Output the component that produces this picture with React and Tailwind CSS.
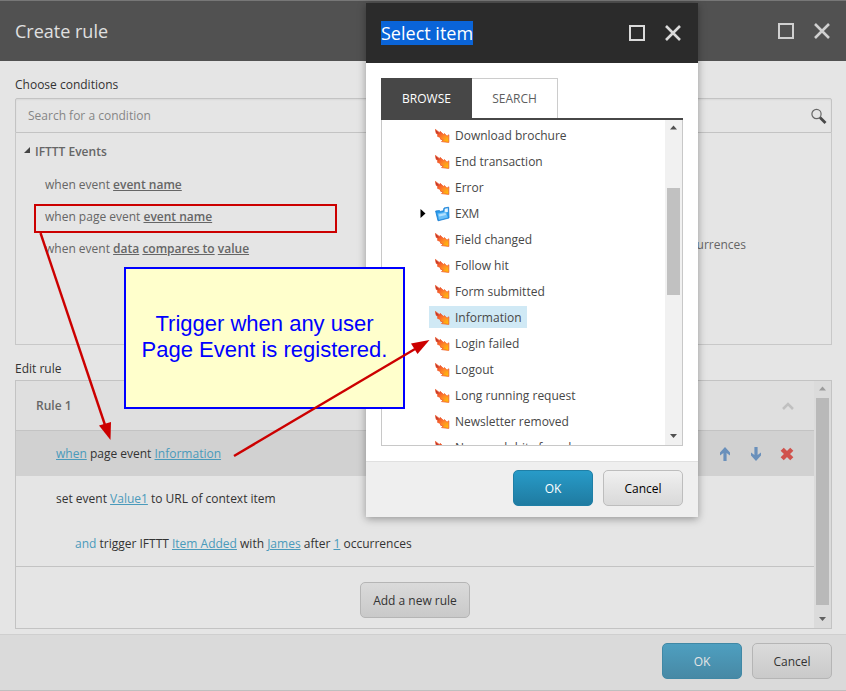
import React from "react";

const items = [
  { name: "Download brochure" },
  { name: "End transaction" },
  { name: "Error" },
  { name: "EXM", folder: true },
  { name: "Field changed" },
  { name: "Follow hit" },
  { name: "Form submitted" },
  { name: "Information", selected: true },
  { name: "Login failed" },
  { name: "Logout" },
  { name: "Long running request" },
  { name: "Newsletter removed" },
  { name: "No search hits found" },
];

function EventIcon() {
  return (
    <svg className="size-4 shrink-0" viewBox="0 0 16 16" aria-hidden="true">
      <defs>
        <linearGradient id="flame" x1="0" y1="0" x2="1" y2="1">
          <stop offset="0.1" stopColor="#a8202c" />
          <stop offset="0.35" stopColor="#f7602c" />
          <stop offset="0.6" stopColor="#ff8c26" />
          <stop offset="1" stopColor="#ffc800" />
        </linearGradient>
      </defs>
      <path d="M0.4 1.4 L4.2 4.4 L5.2 3.4 L8.4 6.4 L9.4 5.6 L12 8.2 L13.8 6.8 V14.4 L6.6 13.6 L8.2 11.8 L5.8 11.4 L5 9.2 L2.6 8.4 L2.8 6.4 L1.2 5.4 Z" fill="url(#flame)" stroke="#f05a28" strokeWidth="0.8" />
    </svg>
  );
}

function FolderIcon() {
  return (
    <svg className="size-4 shrink-0" viewBox="0 0 16 16" aria-hidden="true">
      <path d="M0.6 5 L4.4 4.6 L5.4 5.4 L8.4 4.8 L9 2 L13.6 1.2 L14 12 L3 14.8 Z" fill="#2a9cec" stroke="#1479d0" strokeWidth="0.8" />
      <path d="M9.8 2.8 L12.800 2.300 L12.800 6 L9.500 6.400 Z" fill="#eaf6ff" />
      <path d="M2.600 7.600 L11 5.800 L12.800 11.400 L4 13.800 Z" fill="#6dc0f8" />
      <path d="M3.600 8.400 L10.400 7 L11 9 L4.400 10.600 Z" fill="#b5e1ff" />
    </svg>
  );
}

function WindowControls({ tone }) {
  return (
    <div className={`flex items-center gap-[19px] ${tone}`}>
      <button type="button" aria-label="Maximize" className="size-4 border-2 border-current" />
      <button type="button" aria-label="Close" className="size-[18px]">
        <svg viewBox="0 0 18 18" className="size-full" fill="none" stroke="currentColor" strokeWidth="2.6">
          <path d="M2 2 L16 16 M16 2 L2 16" />
        </svg>
      </button>
    </div>
  );
}

function ScrollBar({ track, thumb, up, down, space }) {
  return (
    <div className={`flex w-[17px] shrink-0 flex-col items-center ${track}`} aria-hidden="true">
      <svg className={`h-[17px] w-[17px] shrink-0 ${up}`} viewBox="0 0 17 17" fill="currentColor">
        <path d="M5 9.500 L8.500 5.500 L12 9.500 Z" />
      </svg>
      <div className={`shrink-0 ${space}`} />
      <div className={`w-[13px] shrink-0 ${thumb}`} />
      <div className="grow" />
      <svg className={`h-[17px] w-[17px] shrink-0 ${down}`} viewBox="0 0 17 17" fill="currentColor">
        <path d="M5 6 L8.500 10 L12 6 Z" />
      </svg>
    </div>
  );
}

function RuleLink({ children }) {
  return <a href="#rule" className="text-[#4a9abb] underline">{children}</a>;
}

function Field({ children }) {
  return <span className="font-semibold underline">{children}</span>;
}

function SelectItemDialog() {
  return (
    <section role="dialog" aria-label="Select item" className="absolute left-[366px] top-[3px] w-[332px] bg-white text-[#474747] shadow-[0_2px_8px_rgba(0,0,0,0.35)]">
      <header className="flex h-[60px] items-center justify-between bg-[#2b2b2b] pl-[15px] pr-4">
        <h2 className="bg-[#0a64d8] text-[18px] leading-6 text-white">Select item</h2>
        <WindowControls tone="text-[#dadada]" />
      </header>
      <div className="p-[15px]">
        <div role="tablist" className="flex h-[42px] border-b-2 border-[#474747]">
          <button type="button" role="tab" aria-selected="true" className="w-[91px] border-t border-[#474747] bg-[#474747] text-white">BROWSE</button>
          <button type="button" role="tab" aria-selected="false" className="w-[86px] border-r border-t border-[#ccc] text-[#5e5e5e]">SEARCH</button>
        </div>
        <div className="flex h-[326px] border border-t-0 border-[#c8c8c8]">
          <ul className="flex min-w-0 grow flex-col gap-1 overflow-hidden pt-1">
            {items.map((item) => (
              <li key={item.name} className="flex h-[22px] shrink-0 items-center pl-[34px]">
                <span className="flex w-[13px] justify-center">
                  {item.folder && (
                    <svg className="h-[9px] w-[6px]" viewBox="0 0 6 9" aria-hidden="true">
                      <path d="M0.5 0 L5.5 4.5 L0.5 9 Z" fill="#000" />
                    </svg>
                  )}
                </span>
                <span className={`flex h-[22px] items-center gap-1 pl-[6px] pr-[5px] pt-0.5 ${item.selected ? "bg-[#d0e9f5]" : ""}`}>
                  {item.folder ? <FolderIcon /> : <EventIcon />}
                  {item.name}
                </span>
              </li>
            ))}
          </ul>
          <ScrollBar track="bg-[#f1f1f1]" thumb="h-[107px] bg-[#c1c1c1]" up="text-[#505050]" down="text-[#505050]" space="h-[51px]" />
        </div>
      </div>
      <footer className="flex h-14 justify-end gap-[10px] border-t border-[#e0e0e0] bg-[#efefef] px-[15px] pt-2">
        <button type="button" className="h-9 w-20 rounded-[5px] border border-[#1f7fa6] bg-linear-to-b from-[#289bc8] to-[#1f7ba1] pt-0.5 text-white">OK</button>
        <button type="button" className="h-9 w-20 rounded-[5px] border border-[#bdbdbd] bg-linear-to-b from-[#f0f0f0] to-[#d9d9d9] pt-0.5 text-black">Cancel</button>
      </footer>
    </section>
  );
}

function Annotations() {
  return (
    <>
      <div className="absolute left-[34px] top-[204px] h-[29px] w-[303px] border-2 border-[#c00]" />
      <p className="absolute left-[124px] top-[267px] flex h-[142px] w-[281px] items-center justify-center border-2 border-[#00f] bg-[#ffc] pb-0.5 text-center font-['Liberation_Sans',Arial,sans-serif] text-[22px] leading-[26px] text-[#00f]">
        Trigger when any user<br />Page Event is registered.
      </p>
      <svg className="pointer-events-none absolute left-0 top-0 h-[500px] w-[500px]" viewBox="0 0 500 500" stroke="#c00" strokeWidth="2.4" fill="#c00" aria-hidden="true">
        <path d="M40.500 233 L105 425" />
        <path d="M110.500 440 L99 425.500 L111 422 Z" stroke="none" />
        <path d="M234 456 L415 349" />
        <path d="M429.500 340 L411 343.500 L417.500 354 Z" stroke="none" />
      </svg>
    </>
  );
}

export default function App() {
  return (
    <div className="relative flex min-h-screen flex-col border-b border-[#bfbfbf] bg-[#e5e5e5] font-['Open_Sans','Noto_Sans',sans-serif] text-[12px] leading-[18px] text-[#333]">
      <header className="flex h-[61px] items-center justify-between border-t border-[#777] bg-[#515151] px-[15px]">
        <h1 className="text-[18px] leading-6 text-[#e0e0e0]">Create rule</h1>
        <WindowControls tone="text-[#d0d0d0]" />
      </header>

      <main className="pl-[15px] pr-[14px] pt-[15px]">
        <label htmlFor="condition" className="block">Choose conditions</label>
        <div className="mt-1 flex h-[35px] items-center rounded-t-[2px] border border-[#c3c3c3] pl-3 pr-1 shadow-[inset_0_1px_2px_rgba(0,0,0,0.06)]">
          <input id="condition" type="text" placeholder="Search for a condition" className="min-w-0 grow bg-transparent outline-none placeholder:text-[#858585]" />
          <button type="button" aria-label="Search" className="size-4">
            <svg viewBox="0 0 16 16" className="size-full" fill="none">
              <circle cx="5.500" cy="6" r="4.600" stroke="#666" strokeWidth="1.200" />
              <path d="M9 9.500 L14.500 15" stroke="#484848" strokeWidth="2.800" />
            </svg>
          </button>
        </div>
        <div className="grid h-[212px] grid-cols-2 border border-t-0 border-[#c8c8c8] text-[#666]">
          <div className="pt-[10px]">
            <h2 className="flex items-center gap-[5px] pl-2 font-semibold">
              <svg className="mb-1 size-[6px]" viewBox="0 0 6 6" aria-hidden="true"><path d="M6 0 V6 H0 Z" fill="#444" /></svg>
              IFTTT Events
            </h2>
            <ul className="flex flex-col gap-[14px] pl-[29px] pt-[15px]">
              <li>when event <Field>event name</Field></li>
              <li>when page event <Field>event name</Field></li>
              <li>when event <Field>data</Field> <Field>compares to</Field> <Field>value</Field></li>
            </ul>
          </div>
          <p className="pr-[85px] pt-[103px] text-right">occurrences</p>
        </div>

        <h2 className="pb-[2px] pt-[15px]">Edit rule</h2>
        <div className="flex border border-[#c3c3c3]">
          <div className="min-w-0 grow">
            <div className="flex h-[50px] items-center justify-between border-b border-[#c3c3c3] bg-[#dfdfdf] pl-5 pr-5">
              <h3 className="font-semibold text-[#666]">Rule 1</h3>
              <button type="button" aria-label="Collapse rule" className="h-2 w-3">
                <svg viewBox="0 0 12 8" className="size-full" fill="none" stroke="#c0c0c0" strokeWidth="2.600"><path d="M1 7 L6 2 L11 7" /></svg>
              </button>
            </div>
            <div className="flex h-[45px] items-center justify-between bg-[#d1d1d1] pl-10 pr-5">
              <p><RuleLink>when</RuleLink> page event <RuleLink>Information</RuleLink></p>
              <div className="flex gap-[17px]">
                <button type="button" aria-label="Move up" className="size-[14px]">
                  <svg viewBox="0 0 14 14" className="size-full" fill="#6a90bb"><path d="M7 0 L12 5.400 V8.600 L8.600 6 V14 H5.400 V6 L2 8.600 V5.400 Z" /></svg>
                </button>
                <button type="button" aria-label="Move down" className="size-[14px]">
                  <svg viewBox="0 0 14 14" className="size-full" fill="#6a90bb"><path d="M7 14 L12 8.600 V5.400 L8.600 8 V0 H5.400 V8 L2 5.400 V8.600 Z" /></svg>
                </button>
                <button type="button" aria-label="Delete" className="size-[14px]">
                  <svg viewBox="0 0 14 14" className="size-full" fill="none" stroke="#d0524c" strokeWidth="4.400"><path d="M2.200 2.200 L11.800 11.800 M11.800 2.200 L2.200 11.800" /></svg>
                </button>
              </div>
            </div>
            <p className="flex h-[45px] items-center whitespace-pre pl-10">set event <RuleLink>Value1</RuleLink> to URL of context item</p>
            <p className="flex h-[45px] items-center whitespace-pre pl-[59px]">
              <span className="text-[#4a9abb]">and</span> trigger IFTTT <RuleLink>Item Added</RuleLink> with <RuleLink>James</RuleLink> after <RuleLink>1</RuleLink> occurrences
            </p>
            <div className="flex h-[62px] items-center justify-center border-t border-[#c3c3c3] pt-1">
              <button type="button" className="h-9 w-[110px] rounded-[5px] border border-[#b5b5b5] bg-linear-to-b from-[#dadada] to-[#c9c9c9] pt-0.5">Add a new rule</button>
            </div>
          </div>
          <ScrollBar track="bg-[#dbdbdb]" thumb="h-[207px] bg-[#b9b9b9]" up="text-[#9c9c9c]" down="text-[#606060]" space="h-0" />
        </div>
      </main>

      <footer className="mt-[5px] flex grow items-start justify-end gap-[10px] border-t border-[#cfcfcf] bg-[#dadada] pl-[15px] pr-[14px] pt-2">
        <button type="button" className="h-9 w-20 rounded-[5px] border border-[#4088a5] bg-linear-to-b from-[#4e9fc0] to-[#4789a5] pt-0.5 text-[#e5e5e5]">OK</button>
        <button type="button" className="h-9 w-20 rounded-[5px] border border-[#b5b5b5] bg-linear-to-b from-[#dbdbdb] to-[#cacaca] pt-0.5">Cancel</button>
      </footer>

      <SelectItemDialog />
      <Annotations />
    </div>
  );
}
